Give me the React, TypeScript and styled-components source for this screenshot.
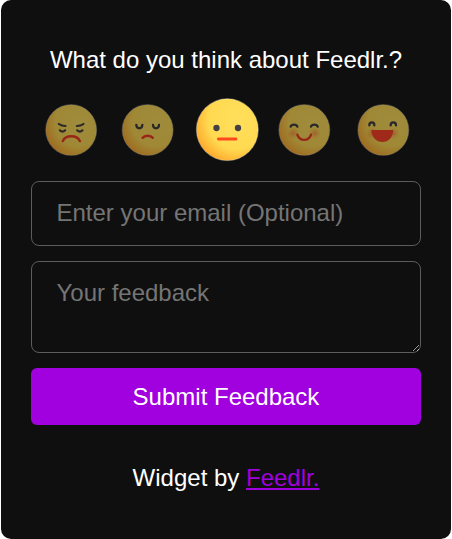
import React from 'react';
import styled, { createGlobalStyle } from 'styled-components';

const GlobalStyle = createGlobalStyle`
  * { box-sizing: border-box; }
  body { margin: 0; background: #fff; overflow: hidden; }
`;

const Card = styled.main`
  width: 450px;
  height: 539px;
  margin-left: 1px;
  padding: 42px 30px 0;
  border-radius: 10px;
  background: #0f0f0f;
  color: #fff;
  font: 24px/36px "Liberation Sans", Arial, sans-serif;
  display: flex;
  flex-direction: column;
`;

const Title = styled.h1`
  margin: 0;
  font-size: 24px;
  font-weight: 400;
  line-height: 36px;
  text-align: center;
`;

const Ratings = styled.div`
  display: grid;
  grid-template-columns: repeat(5, 78px);
  height: 70px;
  margin: 17px 0 16px;
`;

const RatingButton = styled.button<{ $selected: boolean }>`
  width: 78px;
  height: 70px;
  padding: 0;
  border: 0;
  background: none;
  opacity: ${({ $selected }) => ($selected ? 1 : 0.6)};
  cursor: pointer;

  svg { display: block; overflow: visible; }
`;

const EmailInput = styled.input`
  width: 390px;
  height: 65px;
  padding: 0 24.5px 2px;
  border: 1px solid #5c5c5c;
  border-radius: 8px;
  outline: none;
  background: transparent;
  color: #fff;
  font: inherit;

  &::placeholder { color: #757575; opacity: 1; }
`;

const FeedbackInput = styled.textarea`
  display: block;
  width: 390px;
  height: 92px;
  margin-top: 15px;
  padding: 13px 24.5px;
  border: 1px solid #5c5c5c;
  border-radius: 8px;
  outline: none;
  background: transparent;
  color: #fff;
  font: inherit;
  resize: vertical;

  &::placeholder { color: #757575; opacity: 1; }
`;

const SubmitButton = styled.button`
  height: 57px;
  margin-top: 15px;
  padding: 0;
  border: 0;
  border-radius: 6px;
  background: #a100df;
  color: #fff;
  font: inherit;
  cursor: pointer;
`;

const Credit = styled.p`
  margin: 35px 0 0;
  text-align: center;
`;

const CreditLink = styled.a`
  color: #a100df;
  text-decoration: underline;
`;

type Mood = 'angry' | 'sad' | 'neutral' | 'happy' | 'delighted';

const DARK = '#3c3a3c';
const RED = '#f5351f';

/* Three drawing units per pixel; the origin is the centre of the face. */
const features: Record<Mood, React.ReactNode> = {
  angry: (
    <g fill="none" strokeLinecap="round" strokeWidth="6.5">
      <g stroke={DARK}>
        <path d="M-37-18Q-29-12-17-12M37-18Q29-12 17-12" />
        <path d="M-34 1Q-26 9-18 1M34 1Q26 9 18 1" />
      </g>
      <path d="M-25 33C-17 14 17 14 26 33" stroke={RED} strokeWidth="7.5" />
    </g>
  ),
  sad: (
    <g fill="none" strokeLinecap="round" strokeWidth="7">
      <path d="M-34-15C-33-2-17-2-16-15M34-15C33-2 17-2 16-15" stroke={DARK} />
      <path d="M-15 23C-9 15 9 15 15 23" stroke={RED} strokeWidth="7.5" />
    </g>
  ),
  neutral: (
    <g>
      <circle cx="-32.5" cy="-5" r="9.5" fill="#454044" />
      <circle cx="32" cy="-5" r="9.5" fill="#454044" />
      <path d="M-27 28H26" stroke="#ff4a20" strokeWidth="8.5" strokeLinecap="round" />
    </g>
  ),
  happy: (
    <g fill="none" strokeLinecap="round" strokeWidth="7">
      <path d="M-41-10C-38-18-24-18-21-10M20-10C23-18 37-18 40-10" stroke={DARK} />
      <path d="M-21 14C-14 35 13 35 20 14" stroke={RED} strokeWidth="7" />
    </g>
  ),
  delighted: (
    <g>
      <path
        d="M-42-14C-42-26-27-26-27-14M22-14C22-26 38-26 38-14"
        fill="none"
        stroke={DARK}
        strokeWidth="7"
        strokeLinecap="round"
      />
      <path d="M-36 0H30C29 24 14 36-3 36S-35 24-36 0Z" fill="#ff3c22" />
    </g>
  ),
};

const moods: { mood: Mood; shift: number }[] = [
  { mood: 'angry', shift: 3.5 },
  { mood: 'sad', shift: -1 },
  { mood: 'neutral', shift: 4 },
  { mood: 'happy', shift: 1 },
  { mood: 'delighted', shift: 4 },
];

function Face({ mood, shift }: { mood: Mood; shift: number }) {
  const large = mood === 'neutral';
  const radius = large ? 92.5 : 76;
  const blush = mood === 'happy' || mood === 'delighted';
  return (
    <svg
      width="78"
      height="70"
      viewBox={`${-117 - shift} ${large ? -104 : -105} 234 210`}
      aria-hidden="true"
    >
      <defs>
        <radialGradient id={`face-${mood}`} cx=".66" cy=".35" r=".72">
          <stop offset="0" stopColor="#ffdf5b" />
          <stop offset=".65" stopColor="#ffda51" />
          <stop offset="1" stopColor="#ffa92c" />
        </radialGradient>
        <radialGradient id={`blush-${mood}`}>
          <stop stopColor="#ff5b2d" stopOpacity=".5" />
          <stop offset="1" stopColor="#ff7b2d" stopOpacity="0" />
        </radialGradient>
      </defs>
      <circle r={radius} fill={`url(#face-${mood})`} />
      <circle
        r={radius + 0.5}
        fill="none"
        stroke="#fffbed"
        strokeWidth="1.5"
        strokeOpacity=".7"
      />
      {blush && (
        <g fill={`url(#blush-${mood})`}>
          <circle cx="-34" cy="10" r="18" />
          <circle cx="31" cy="10" r="18" />
        </g>
      )}
      {features[mood]}
    </svg>
  );
}

export default function App() {
  const [selected, setSelected] = React.useState<Mood>('neutral');
  return (
    <>
      <GlobalStyle />
      <Card>
        <Title>What do you think about Feedlr.?</Title>
        <Ratings>
          {moods.map(({ mood, shift }) => (
            <RatingButton
              key={mood}
              type="button"
              $selected={selected === mood}
              aria-label={mood}
              onClick={() => setSelected(mood)}
            >
              <Face mood={mood} shift={shift} />
            </RatingButton>
          ))}
        </Ratings>
        <EmailInput type="email" placeholder="Enter your email (Optional)" />
        <FeedbackInput placeholder="Your feedback" />
        <SubmitButton type="button">Submit Feedback</SubmitButton>
        <Credit>
          Widget by <CreditLink href="#">Feedlr.</CreditLink>
        </Credit>
      </Card>
    </>
  );
}
